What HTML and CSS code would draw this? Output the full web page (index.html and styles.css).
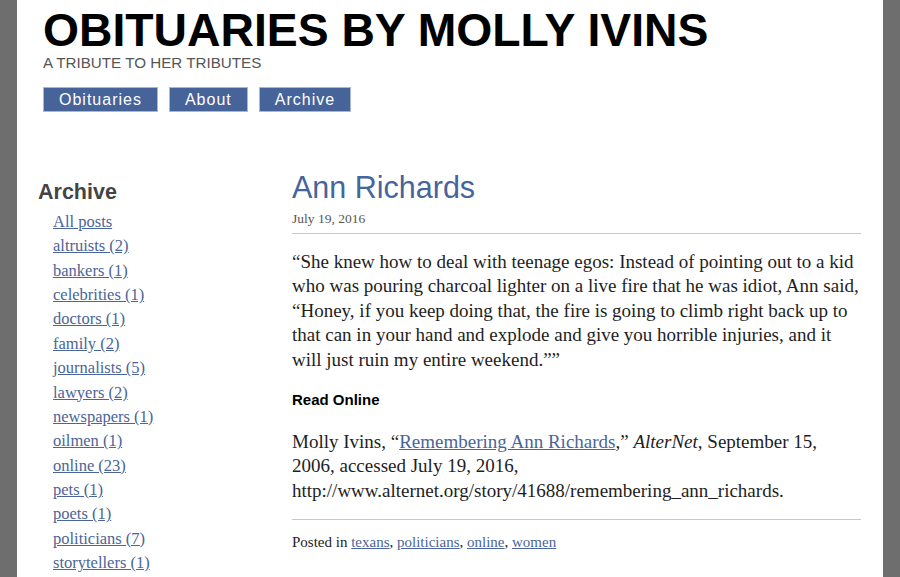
FILE: index.html
```html
<!DOCTYPE html>
<html lang="en">
<head>
<meta charset="utf-8">
<title>Obituaries by Molly Ivins</title>
<link rel="stylesheet" href="styles.css">
</head>
<body>
<div class="page">
  <header class="site-header">
    <h1 class="site-title">OBITUARIES BY MOLLY IVINS</h1>
    <p class="site-tagline">A TRIBUTE TO HER TRIBUTES</p>
    <nav class="site-nav">
      <a class="nav-btn" href="#">Obituaries</a>
      <a class="nav-btn" href="#">About</a>
      <a class="nav-btn" href="#">Archive</a>
    </nav>
  </header>
  <div class="layout">
    <aside class="sidebar">
      <h2 class="sidebar-title">Archive</h2>
      <ul class="cat-list">
        <li><a href="#">All posts</a></li>
        <li><a href="#">altruists (2)</a></li>
        <li><a href="#">bankers (1)</a></li>
        <li><a href="#">celebrities (1)</a></li>
        <li><a href="#">doctors (1)</a></li>
        <li><a href="#">family (2)</a></li>
        <li><a href="#">journalists (5)</a></li>
        <li><a href="#">lawyers (2)</a></li>
        <li><a href="#">newspapers (1)</a></li>
        <li><a href="#">oilmen (1)</a></li>
        <li><a href="#">online (23)</a></li>
        <li><a href="#">pets (1)</a></li>
        <li><a href="#">poets (1)</a></li>
        <li><a href="#">politicians (7)</a></li>
        <li><a href="#">storytellers (1)</a></li>
      </ul>
    </aside>
    <main class="post">
      <h2 class="post-title">Ann Richards</h2>
      <div class="post-date">July 19, 2016</div>
      <p class="post-text">“She knew how to deal with teenage egos: Instead of pointing out to a kid who was pouring charcoal lighter on a live fire that he was idiot, Ann said, “Honey, if you keep doing that, the fire is going to climb right back up to that can in your hand and explode and give you horrible injuries, and it will just ruin my entire weekend.””</p>
      <h3 class="read-online">Read Online</h3>
      <p class="post-text cite">Molly Ivins, “<a href="#">Remembering Ann Richards</a>,” <em>AlterNet</em>, September 15, 2006, accessed July 19, 2016, http://www.alternet.org/story/41688/remembering_ann_richards.</p>
      <div class="post-meta">Posted in <a href="#">texans</a>, <a href="#">politicians</a>, <a href="#">online</a>, <a href="#">women</a></div>
    </main>
  </div>
</div>
</body>
</html>
```
FILE: styles.css
```css
html, body {
  margin: 0;
  padding: 0;
  background: #6e6e6e;
}
.page {
  width: 866px;
  height: 577px;
  margin: 0 auto;
  background: #ffffff;
  overflow: hidden;
  padding: 8px 22px 0 21px;
  box-sizing: border-box;
}
.site-header {
  padding-left: 5px;
}
.site-title {
  margin: 0;
  font-family: "Liberation Sans", Arial, sans-serif;
  font-weight: bold;
  font-size: 46.3px;
  line-height: 45px;
  color: #000;
}
.site-tagline {
  margin: 2px 0 0;
  font-family: "Liberation Sans", Arial, sans-serif;
  font-size: 15.2px;
  line-height: 16px;
  color: #555;
}
.site-nav {
  display: flex;
  gap: 11px;
  margin-top: 16px;
}
.nav-btn {
  display: block;
  height: 25px;
  padding: 0 15px;
  box-sizing: border-box;
  background: #46639a;
  border: 1px solid #a9b8d2;
  color: #fff;
  text-decoration: none;
  font-family: "Liberation Sans", Arial, sans-serif;
  font-size: 16px;
  letter-spacing: 1px;
  line-height: 23px;
}
.layout {
  display: grid;
  grid-template-columns: 254px 1fr;
  margin-top: 57px;
}
.sidebar {
  padding-top: 10px;
}
.sidebar-title {
  margin: 0;
  font-family: "Liberation Sans", Arial, sans-serif;
  font-weight: bold;
  font-size: 21.5px;
  line-height: 26px;
  color: #444;
}
.cat-list {
  list-style: none;
  margin: 5px 0 0;
  padding: 0 0 0 15px;
  font-family: "Liberation Serif", Georgia, serif;
  font-size: 16.5px;
  line-height: 24.36px;
}
.cat-list a, .post a {
  color: #4a6598;
}
.post-title {
  margin: 0;
  font-family: "Liberation Sans", Arial, sans-serif;
  font-weight: normal;
  font-size: 30.5px;
  line-height: 36px;
  color: #46659c;
}
.post-date {
  margin-top: 6px;
  padding-bottom: 6px;
  border-bottom: 1px solid #c8c8c8;
  font-family: "Liberation Serif", Georgia, serif;
  font-size: 13.5px;
  line-height: 16px;
  color: #555;
}
.post-text {
  margin: 16px 0 0;
  font-family: "Liberation Serif", Georgia, serif;
  font-size: 19px;
  line-height: 24.4px;
  color: #1e1e1e;
}
.post-text.cite {
  margin-top: 21px;
}
.read-online {
  margin: 19px 0 0;
  font-family: "Liberation Sans", Arial, sans-serif;
  font-weight: bold;
  font-size: 15px;
  line-height: 18px;
  color: #000;
}
.post-meta {
  margin-top: 16px;
  padding-top: 13px;
  border-top: 1px solid #c8c8c8;
  font-family: "Liberation Serif", Georgia, serif;
  font-size: 15px;
  line-height: 18px;
  color: #222;
}
```
